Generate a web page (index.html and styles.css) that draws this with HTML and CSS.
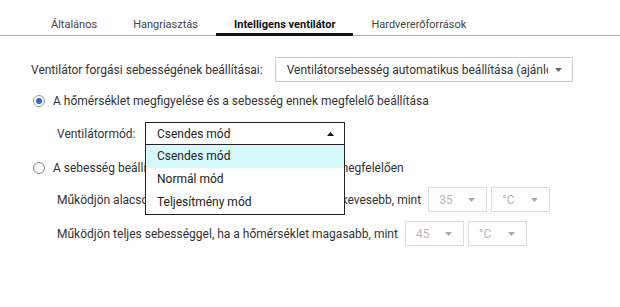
FILE: index.html
```html
<!DOCTYPE html>
<html lang="hu">
<head>
<meta charset="utf-8">
<link rel="stylesheet" href="styles.css">
</head>
<body>
<div class="tabs">
  <div class="tab">Általános</div>
  <div class="tab">Hangriasztás</div>
  <div class="tab active">Intelligens ventilátor</div>
  <div class="tab">Hardvererőforrások</div>
</div>
<div class="content">
  <div class="row speed-row">
    <span class="label">Ventilátor forgási sebességének beállításai:</span>
    <div class="select main-select">
      <span class="select-text">Ventilátorsebesség automatikus beállítása (ajánlott)</span>
      <svg class="arrow" width="7" height="4" viewBox="0 0 7 4"><path d="M0 0h7L3.5 4z" fill="#666"/></svg>
    </div>
  </div>
  <div class="row radio-row first-radio">
    <span class="radio checked"></span>
    <span>A hőmérséklet megfigyelése és a sebesség ennek megfelelő beállítása</span>
  </div>
  <div class="row mode-row">
    <span class="mode-label">Ventilátormód:</span>
    <div class="mode-wrap">
      <div class="select mode-select">
        <span>Csendes mód</span>
        <svg class="arrow" width="7" height="4" viewBox="0 0 7 4"><path d="M0 4h7L3.5 0z" fill="#111"/></svg>
      </div>
      <ul class="dropdown">
        <li class="hl">Csendes mód</li>
        <li>Normál mód</li>
        <li>Teljesítmény mód</li>
      </ul>
    </div>
  </div>
  <div class="row radio-row second-radio">
    <span class="radio"></span>
    <span>A sebesség beállítása manuálisan, a hőmérsékletnek megfelelően</span>
  </div>
  <div class="row temp-row row-a">
    <span>Működjön alacsonyabb sebességgel, ha hőmérséklet kevesebb, mint</span>
    <div class="selects">
      <div class="select small"><span>35</span><svg class="arrow" width="7" height="4" viewBox="0 0 7 4"><path d="M0 0h7L3.5 4z" fill="#aaa"/></svg></div>
      <div class="select small"><span>°C</span><svg class="arrow" width="7" height="4" viewBox="0 0 7 4"><path d="M0 0h7L3.5 4z" fill="#aaa"/></svg></div>
    </div>
  </div>
  <div class="row temp-row row-b">
    <span>Működjön teljes sebességgel, ha a hőmérséklet magasabb, mint</span>
    <div class="selects">
      <div class="select small"><span>45</span><svg class="arrow" width="7" height="4" viewBox="0 0 7 4"><path d="M0 0h7L3.5 4z" fill="#aaa"/></svg></div>
      <div class="select small"><span>°C</span><svg class="arrow" width="7" height="4" viewBox="0 0 7 4"><path d="M0 0h7L3.5 4z" fill="#aaa"/></svg></div>
    </div>
  </div>
</div>
</body>
</html>
```
FILE: styles.css
```css
* { box-sizing: border-box; }
body {
  margin: 0;
  font-family: Roboto, "Liberation Sans", sans-serif;
  font-size: 12px;
  color: #333;
  background: #fff;
}
.tabs {
  display: flex;
  padding-left: 33px;
  border-bottom: 1px solid #aaa;
  height: 36px;
}
.tab {
  font-size: 11px;
  line-height: 14px;
  padding: 18px 18px 1px;
  height: 36px;
  border-bottom: 3px solid transparent;
  color: #444;
}
.tab.active {
  font-weight: bold;
  color: #111;
  border-bottom-color: #111;
}
.content {
  padding-left: 31px;
}
.row {
  display: flex;
  align-items: center;
  line-height: 14px;
}
.speed-row { margin-top: 21px; }
.label { margin-right: 12px; }
.select {
  display: flex;
  align-items: center;
  justify-content: space-between;
  border: 1px solid #ccc;
  height: 25px;
  background: #fff;
}
.main-select {
  width: 298px;
  padding: 0 10px 0 11px;
}
.select-text {
  width: 261px;
  overflow: hidden;
  white-space: nowrap;
}
.radio-row { height: 16px; }
.first-radio { margin-top: 11px; }
.radio {
  width: 12px;
  height: 12px;
  border: 1px solid #888;
  border-radius: 50%;
  margin: 0 8px 0 2px;
  display: flex;
  align-items: center;
  justify-content: center;
  flex: none;
}
.radio.checked { border-color: #999; }
.radio.checked::before {
  content: "";
  width: 6px;
  height: 6px;
  border-radius: 50%;
  background: #2a64d8;
}
.mode-row {
  margin-top: 13px;
  padding-left: 26px;
}
.mode-label { width: 88px; }
.mode-wrap { position: relative; }
.mode-select {
  width: 200px;
  height: 23px;
  border-color: #222;
  padding: 0 10px 0 11px;
  color: #222;
}
.dropdown {
  position: absolute;
  left: 0;
  top: 22px;
  width: 200px;
  margin: 0;
  padding: 0;
  list-style: none;
  border: 1px solid #222;
  background: #fff;
  z-index: 2;
  color: #222;
}
.dropdown li {
  height: 23px;
  line-height: 23px;
  padding-left: 11px;
}
.dropdown li.hl { background: #d5f9fb; }
.second-radio { margin-top: 15px; }
.temp-row { padding-left: 26px; }
.row-a { margin-top: 11px; }
.row-b { margin-top: 9px; }
.selects {
  display: flex;
  gap: 4px;
  margin-left: 7px;
}
.small {
  width: 59px;
  padding: 0 11px 0 10px;
  border-color: #ddd;
  color: #b5b5b5;
}
```
